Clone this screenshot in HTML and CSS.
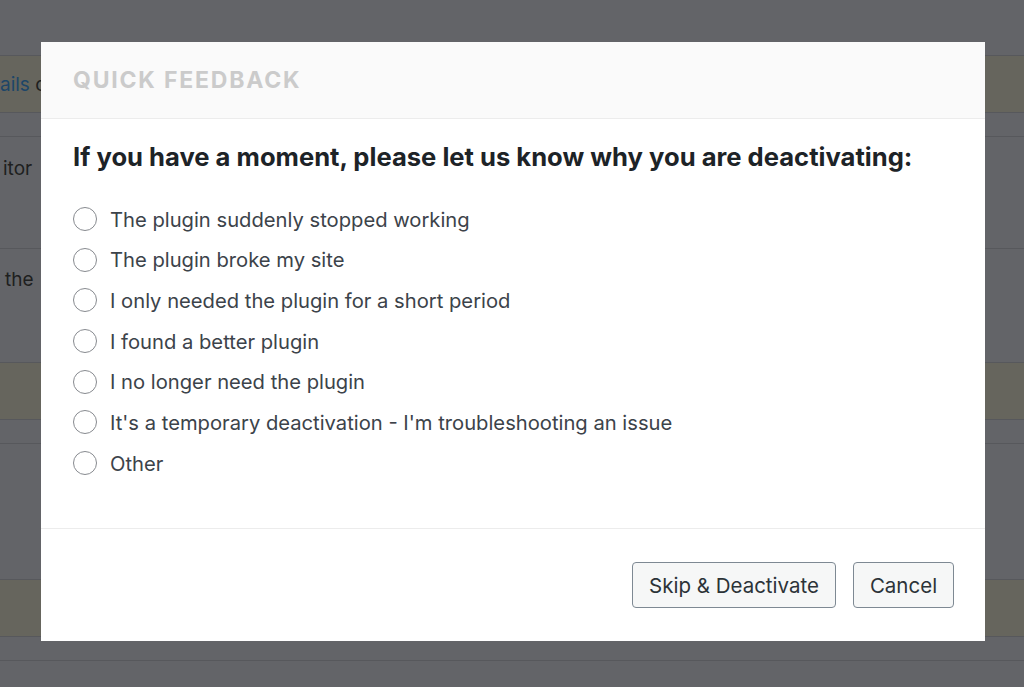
FILE: index.html
```html
<!DOCTYPE html>
<html lang="en">
<head>
<meta charset="utf-8">
<title>Quick Feedback</title>
<link rel="stylesheet" href="styles.css">
</head>
<body>
<div class="page">
  <div class="bg-row top"></div>
  <div class="bg-row notice"><span class="bg-text"><span class="link">ails</span> c</span></div>
  <div class="bg-row gap"></div>
  <div class="bg-row tall first"><span class="bg-text">itor</span></div>
  <div class="bg-row tall second"><span class="bg-text">the</span></div>
  <div class="bg-row notice"></div>
  <div class="bg-row gap"></div>
  <div class="bg-row tall third"></div>
  <div class="bg-row notice"></div>
  <div class="bg-row gap"></div>
  <div class="bg-row rest"></div>

  <div class="modal">
    <div class="modal-header">
      <h3 class="modal-title">Quick Feedback</h3>
    </div>
    <div class="modal-body">
      <h2 class="question">If you have a moment, please let us know why you are deactivating:</h2>
      <ul class="reasons">
        <li class="reason"><span class="radio"></span><span class="label">The plugin suddenly stopped working</span></li>
        <li class="reason"><span class="radio"></span><span class="label">The plugin broke my site</span></li>
        <li class="reason"><span class="radio"></span><span class="label">I only needed the plugin for a short period</span></li>
        <li class="reason"><span class="radio"></span><span class="label">I found a better plugin</span></li>
        <li class="reason"><span class="radio"></span><span class="label">I no longer need the plugin</span></li>
        <li class="reason"><span class="radio"></span><span class="label">It's a temporary deactivation - I'm troubleshooting an issue</span></li>
        <li class="reason"><span class="radio"></span><span class="label">Other</span></li>
      </ul>
    </div>
    <div class="modal-footer">
      <button class="btn">Skip &amp; Deactivate</button>
      <button class="btn">Cancel</button>
    </div>
  </div>
</div>
</body>
</html>
```

FILE: styles.css
```css
html, body {
  margin: 0;
  padding: 0;
}
body {
  background: #636468;
  font-family: Inter, "Noto Sans", "Liberation Sans", sans-serif;
}
.page {
  position: relative;
  width: 1024px;
  height: 687px;
  overflow: hidden;
  display: flex;
  flex-direction: column;
}
.bg-row {
  flex: none;
  border-bottom: 1px solid #57585c;
  display: flex;
  align-items: center;
  overflow: hidden;
}
.bg-row.top { height: 55px; }
.bg-row.notice { height: 56px; background: #66655d; }
.bg-row.gap { height: 23px; }
.bg-row.tall.first { height: 111px; align-items: flex-start; }
.bg-row.tall.second { height: 113px; align-items: flex-start; }
.bg-row.tall.third { height: 135px; }
.bg-row.rest { flex: 1; border-bottom: 0; }
.bg-text {
  font-size: 19px;
  color: #1e1f20;
  white-space: nowrap;
}
.notice .bg-text { margin-left: 0; }
.first .bg-text { margin-top: 20px; margin-left: 3px; }
.second .bg-text { margin-top: 19px; margin-left: 5px; }
.link { color: #1d4668; }

.modal {
  position: absolute;
  left: 41px;
  top: 42px;
  width: 944px;
  height: 599px;
  background: #ffffff;
  display: flex;
  flex-direction: column;
}
.modal-header {
  height: 77px;
  box-sizing: border-box;
  background: #fafafa;
  border-bottom: 1px solid #ececec;
  padding: 0 32px;
  display: flex;
  align-items: center;
}
.modal-title {
  margin: 0;
  font-size: 23px;
  font-weight: 700;
  letter-spacing: 1.8px;
  text-transform: uppercase;
  color: #cbcbcb;
}
.modal-body {
  flex: 1;
  padding: 23px 32px 0;
  border-bottom: 1px solid #ececec;
}
.question {
  margin: 0 0 35px;
  font-size: 25.6px;
  font-weight: 700;
  color: #1d2327;
  line-height: 30px;
  white-space: nowrap;
}
.reasons {
  list-style: none;
  margin: 0;
  padding: 0;
  display: flex;
  flex-direction: column;
  gap: 16.7px;
}
.reason {
  display: flex;
  align-items: center;
  gap: 13px;
  height: 24px;
}
.radio {
  flex: none;
  width: 24px;
  height: 24px;
  box-sizing: border-box;
  border: 1.5px solid #878a8f;
  border-radius: 50%;
  background: #fff;
}
.label {
  font-size: 20.2px;
  color: #3c434a;
  white-space: nowrap;
}
.modal-footer {
  height: 112px;
  box-sizing: border-box;
  padding: 0 31px 0 0;
  display: flex;
  align-items: center;
  justify-content: flex-end;
  gap: 17px;
}
.btn {
  font-family: inherit;
  font-size: 20.5px;
  color: #2c3338;
  background: #f6f7f7;
  border: 1px solid #7e8993;
  border-radius: 4px;
  height: 46px;
  padding: 0;
}
.btn:first-child { width: 204px; }
.btn:last-child { width: 101px; }
```
